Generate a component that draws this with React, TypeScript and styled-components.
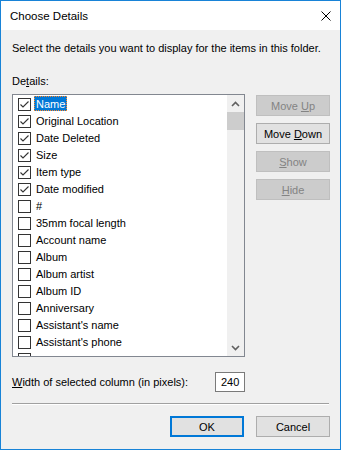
import React from "react";
import styled, { createGlobalStyle } from "styled-components";

const GlobalStyle = createGlobalStyle`
  html, body {
    margin: 0;
    padding: 0;
    background: #ffffff;
  }
  body {
    font-family: "Liberation Sans", Arial, sans-serif;
    font-size: 11px;
    color: #000000;
  }
`;

interface Detail {
  name: string;
  checked: boolean;
}

// last entry only peeks out under the list's bottom edge
const details: Detail[] = [
  { name: "Name", checked: true },
  { name: "Original Location", checked: true },
  { name: "Date Deleted", checked: true },
  { name: "Size", checked: true },
  { name: "Item type", checked: true },
  { name: "Date modified", checked: true },
  { name: "#", checked: false },
  { name: "35mm focal length", checked: false },
  { name: "Account name", checked: false },
  { name: "Album", checked: false },
  { name: "Album artist", checked: false },
  { name: "Album ID", checked: false },
  { name: "Anniversary", checked: false },
  { name: "Assistant's name", checked: false },
  { name: "Assistant's phone", checked: false },
  { name: "", checked: false },
];

const Chevron = ({ up }: { up?: boolean }) => (
  <svg width="9" height="6" viewBox="0 0 9 6">
    <polyline
      points={up ? "1,5 4.5,1.5 8,5" : "1,1 4.5,4.5 8,1"}
      fill="none"
      stroke="#606060"
      strokeWidth="1.6"
    />
  </svg>
);

export default function App() {
  return (
    <>
      <GlobalStyle />
      <Window>
        <TitleBar>
          <Title>Choose Details</Title>
          <svg width="10" height="10" viewBox="0 0 10 10" style={{ marginRight: 9 }}>
            <path d="M0.5 0.5 L9.5 9.5 M9.5 0.5 L0.5 9.5" stroke="#000" strokeWidth="1" />
          </svg>
        </TitleBar>
        <Body>
          <Intro>Select the details you want to display for the items in this folder.</Intro>
          <Label>
            De<u>t</u>ails:
          </Label>
          <MainRow>
            <ListBox>
              <Items>
                {details.map((d, i) => (
                  <Row key={i}>
                    <CheckBox>
                      {d.checked && (
                        <svg width="11" height="11" viewBox="0 0 11 11">
                          <polyline points="1.5,5.5 4,8 9.5,2.5" fill="none" stroke="#333" strokeWidth="1.1" />
                        </svg>
                      )}
                    </CheckBox>
                    {d.name && <ItemText $selected={i === 0}>{d.name}</ItemText>}
                  </Row>
                ))}
              </Items>
              <ScrollBar>
                <ScrollArrow>
                  <Chevron up />
                </ScrollArrow>
                <Thumb />
                <Track />
                <ScrollArrow>
                  <Chevron />
                </ScrollArrow>
              </ScrollBar>
            </ListBox>
            <SideButtons>
              <Button $disabled>
                <span>
                  Move <u>U</u>p
                </span>
              </Button>
              <Button>
                <span>
                  Move <u>D</u>own
                </span>
              </Button>
              <Button $disabled>
                <span>
                  <u>S</u>how
                </span>
              </Button>
              <Button $disabled>
                <span>
                  <u>H</u>ide
                </span>
              </Button>
            </SideButtons>
          </MainRow>
          <WidthRow>
            <span>
              <u>W</u>idth of selected column (in pixels):
            </span>
            <WidthInput>240</WidthInput>
          </WidthRow>
          <Separator />
          <Footer>
            <Button $default>
              <span>OK</span>
            </Button>
            <Button>
              <span>Cancel</span>
            </Button>
          </Footer>
        </Body>
      </Window>
    </>
  );
}

const Window = styled.div`
  width: 341px;
  height: 450px;
  box-sizing: border-box;
  border: 1px solid #1883d7;
  display: flex;
  flex-direction: column;
  background: #f0f0f0;
`;

const TitleBar = styled.div`
  height: 29px;
  background: #ffffff;
  display: flex;
  align-items: center;
  justify-content: space-between;
`;

const Title = styled.span`
  padding-left: 9px;
  font-size: 11.5px;
`;

const Body = styled.div`
  flex: 1;
  padding: 11px 10px 0 11px;
  display: flex;
  flex-direction: column;
`;

const Intro = styled.div`
  line-height: 15px;
`;

const Label = styled.div`
  line-height: 15px;
  margin-top: 18px;
`;

const MainRow = styled.div`
  display: flex;
  gap: 11px;
  margin-top: 5px;
`;

const ListBox = styled.div`
  width: 233px;
  height: 263px;
  box-sizing: border-box;
  border: 1px solid #828790;
  background: #ffffff;
  display: flex;
  overflow: hidden;
`;

const Items = styled.div`
  flex: 1;
  overflow: hidden;
  padding-left: 5px;
`;

const Row = styled.div`
  height: 17px;
  display: flex;
  align-items: flex-start;
`;

const CheckBox = styled.span`
  width: 13px;
  height: 13px;
  box-sizing: border-box;
  border: 1px solid #333333;
  background: #ffffff;
  margin-top: 3px;
  display: flex;
  align-items: center;
  justify-content: center;
`;

const ItemText = styled.span<{ $selected?: boolean }>`
  margin: 1px 0 0 3px;
  height: 15px;
  line-height: 12px;
  box-sizing: border-box;
  padding: 1px 1px 0;
  border: 1px dotted ${(p) => (p.$selected ? "#ff8728" : "transparent")};
  background: ${(p) => (p.$selected ? "#0078d7" : "transparent")};
  color: ${(p) => (p.$selected ? "#ffffff" : "#000000")};
  white-space: nowrap;
`;

const ScrollBar = styled.div`
  width: 17px;
  background: #f0f0f0;
  display: flex;
  flex-direction: column;
`;

const ScrollArrow = styled.div`
  height: 17px;
  display: flex;
  align-items: center;
  justify-content: center;
`;

const Thumb = styled.div`
  height: 18px;
  background: #cdcdcd;
`;

const Track = styled.div`
  flex: 1;
`;

const SideButtons = styled.div`
  display: flex;
  flex-direction: column;
  gap: 7px;
  margin-top: 1px;
`;

const Button = styled.div<{ $disabled?: boolean; $default?: boolean }>`
  width: 74px;
  height: 21px;
  box-sizing: border-box;
  display: flex;
  align-items: center;
  justify-content: center;
  white-space: pre;
  border: 1px solid ${(p) => (p.$default ? "#0078d7" : p.$disabled ? "#bfbfbf" : "#adadad")};
  box-shadow: ${(p) => (p.$default ? "inset 0 0 0 1px #0078d7" : "none")};
  background: ${(p) => (p.$disabled ? "#cccccc" : "#e1e1e1")};
  color: ${(p) => (p.$disabled ? "#838383" : "#000000")};
`;

const WidthRow = styled.div`
  width: 233px;
  margin-top: 15px;
  display: flex;
  align-items: center;
  justify-content: space-between;
`;

const WidthInput = styled.div`
  width: 30px;
  height: 20px;
  box-sizing: border-box;
  border: 1px solid #7a7a7a;
  background: #ffffff;
  padding-left: 5px;
  line-height: 18px;
`;

const Separator = styled.div`
  width: 317px;
  margin-top: 11px;
  border-top: 1px solid #a0a0a0;
  border-bottom: 1px solid #ffffff;
`;

const Footer = styled.div`
  margin-top: 11px;
  display: flex;
  justify-content: flex-end;
  gap: 12px;
`;
